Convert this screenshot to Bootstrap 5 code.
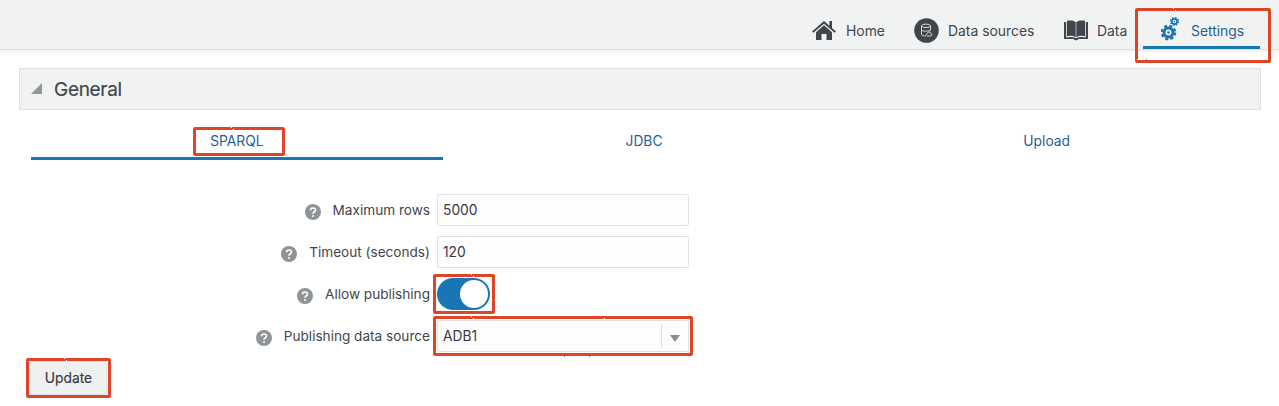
<!DOCTYPE html>
<html lang="en">
<head>
<meta charset="utf-8">
<meta name="viewport" content="width=device-width, initial-scale=1">
<title>Settings</title>
<link href="https://cdn.jsdelivr.net/npm/bootstrap@5.3.0/dist/css/bootstrap.min.css" rel="stylesheet">
<style>
body{font-family:Inter,"Liberation Sans",sans-serif;font-size:14px;line-height:20px;color:#41464b;background:#fff;overflow:hidden;min-height:406px}
.topbar{height:50px;background:#f1f3f3;border-bottom:1px solid #dfe1e2;box-shadow:0 2px 1px #f3f4f4;padding:0 19px 0 0}
.topbar .nav-item{height:49px;padding-top:12px}
.topbar .nav-link{color:#41464b;padding:0;height:37px;display:flex;align-items:center;white-space:nowrap;font-size:13.9px}
.topbar svg{flex:none}
.topbar .nav-link.active{color:#1f5f92;border-bottom:3px solid #1976b4;padding:3px 0 0 18px}
.topbar .nav-link.active svg{margin-top:-4px}
.w-home{width:102px}.w-sources{width:150px}.w-data{width:79px}.w-settings{width:117px}
.l-home{margin-left:10px}.l-src{margin-left:9px}.l-data{margin-left:9px}.l-set{margin-left:11px}
.section-head{margin:18px 18px 0 19px;height:42px;background:#f1f3f3;border:1px solid #dfe1e2;padding-left:11px}
.section-head h1{font-size:19px;letter-spacing:-.3px;line-height:24px;font-weight:400;margin:2px 0 0 11px;-webkit-text-stroke:.2px}
.tabs{margin:12px 31px 0 31px;height:38px}
.tabs .nav-link{padding:9px 0 0;height:38px;color:#1f5f92;text-align:center;border-bottom:3px solid transparent;font-size:13.8px}
.tabs .nav-link.active{border-color:#1976b4}
.t1{width:412px}.t2{width:403px}.t3{width:403px}
.fields{margin-top:34px}
.line{height:32px;margin-bottom:10px}
.caption{width:430px;margin-right:7px;font-size:13.6px}
.help{width:16px;height:16px;margin:4px 12px 0 0;flex:none}
.box{width:252px;height:32px;border:1px solid #dfe1e2;border-radius:2px;background:#fdfdfd;padding:0 5px;font-size:13.8px;color:#36393d;box-shadow:none}
.switch{width:53px;height:32px;border-radius:16px;background:#1976b4;padding:2px}
.switch i{width:28px;height:28px;border-radius:50%;background:#fff}
.arrow{width:27px;height:24px;border-left:1px solid #dfe1e2}
.update{width:78px;height:34px;border:1px solid #e0e2e3;background:#eff0f0;border-radius:2px;margin:-1px 0 0 29px}
.update .btn{font-size:13.8px;color:#36393d;-webkit-text-stroke:.15px}
.update .btn span{display:block;padding:2px 0 0 1px}
.marked{position:relative}
.marked::after{content:"";position:absolute;border:3px solid #e04427;border-radius:2px;pointer-events:none;filter:url(#rough);z-index:2}
.m-set::after{left:-8px;right:-11px;top:8px;bottom:-14px}
.m-tab::after{left:-17px;right:-21px;top:-4px;bottom:-5px}
.m-switch::after{inset:-4px -5px -4px -4px}
.m-select::after{inset:-4px}
.m-update::after{inset:-4px -5px -4px -4px}
</style>
</head>
<body>
<svg width="0" height="0" class="position-absolute"><filter id="rough" x="-5%" y="-15%" width="110%" height="130%" color-interpolation-filters="sRGB"><feTurbulence type="fractalNoise" baseFrequency=".45" numOctaves="1" seed="4"/><feDisplacementMap in="SourceGraphic" scale="2" xChannelSelector="R" yChannelSelector="G"/></filter></svg>

<header class="topbar d-flex justify-content-end">
<ul class="nav flex-nowrap">
<li class="nav-item w-home"><a class="nav-link" href="#"><svg width="24" height="22" viewBox="0 0 24 22" fill="#41464b"><path d="M12 1 0 11.500l1.300 1.300L12 3.700l10.700 9.100L24 11.500l-4-3.500V1h-2.600v4.700z"/><path d="M12 5.200 4 12.200V20h5.500v-6h5v6H20v-7.800z"/></svg><span class="l-home">Home</span></a></li>
<li class="nav-item w-sources"><a class="nav-link" href="#"><svg width="25" height="25" viewBox="0 0 25 25" fill="none"><circle cx="12.500" cy="12.500" r="12.300" fill="#41464b"/><g stroke="#d5d8d9" stroke-width="1"><ellipse cx="12" cy="7.800" rx="4.500" ry="1.700"/><path d="M7.500 7.800v8.500c0 1 2 1.700 4.500 1.700M16.500 7.800v4.500M7.500 12c1 1.500 6 1.500 9 .3"/><path d="M13.500 18a1.500 1.500 0 0 1 0-2.800c.5-1.800 2.700-1.800 3 0a1.400 1.400 0 0 1 0 2.800z"/></g></svg><span class="l-src">Data sources</span></a></li>
<li class="nav-item w-data"><a class="nav-link" href="#"><svg width="24" height="22" viewBox="0 0 24 22" fill="#41464b"><path d="M3 .8c4-.8 7-.3 8.700 1.500V17.500c-2-1.700-5-2.200-8.700-1.200zM21 .8c-4-.8-7-.3-8.700 1.500V17.500c2-1.700 5-2.200 8.700-1.200z"/><path d="M0 2h2.200v15.400c4-.8 7-.7 9.800.8 3-1.500 6-1.600 9.800-.8V2H24v17h-9.500c-1 1.800-4 1.800-5 0H0z"/></svg><span class="l-data">Data</span></a></li>
<li class="nav-item w-settings marked m-set"><a class="nav-link active" href="#"><svg width="19" height="25" viewBox="0 0 19 25" fill="none" stroke="#1976b4"><circle cx="7.500" cy="16.500" r="4.500" stroke-width="2.900"/><circle cx="7.500" cy="16.500" r="6.500" stroke-width="2.600" stroke-dasharray="2.900 2.205"/><circle cx="7.500" cy="16.500" r="1.200" fill="#1976b4" stroke="none"/><circle cx="13.500" cy="5.500" r="2.600" stroke-width="1.700"/><circle cx="13.500" cy="5.500" r="3.800" stroke-width="1.600" stroke-dasharray="1.600 1.385"/><circle cx="13.500" cy="5.500" r=".7" fill="#1976b4" stroke="none"/></svg><span class="l-set">Settings</span></a></li>
</ul>
</header>

<main>
<div class="section-head d-flex align-items-center"><svg width="12" height="12" viewBox="0 0 12 12"><path d="M11 0v11H0z" fill="#92979b"/></svg><h1>General</h1></div>
<nav class="tabs nav flex-nowrap">
<a class="nav-link active t1" href="#"><span class="d-inline-block marked m-tab">SPARQL</span></a>
<a class="nav-link t2" href="#">JDBC</a>
<a class="nav-link t3" href="#">Upload</a>
</nav>
<svg width="0" height="0" class="position-absolute"><symbol id="q" viewBox="0 0 16 16"><circle cx="8" cy="8" r="8" fill="#8f9498"/><path d="M5.500 6.300C5.500 3.200 10.600 3.200 10.500 6 10.500 7.800 8 7.700 8 9.700" fill="none" stroke="#fff" stroke-width="1.600"/><circle cx="8" cy="12" r="1" fill="#fff"/></symbol></svg>
<form class="fields">
<div class="line d-flex align-items-center"><label class="caption d-flex justify-content-end align-items-center"><svg class="help"><use href="#q"/></svg><span>Maximum rows</span></label><input class="form-control box" value="5000"></div>
<div class="line d-flex align-items-center"><label class="caption d-flex justify-content-end align-items-center"><svg class="help"><use href="#q"/></svg><span>Timeout (seconds)</span></label><input class="form-control box" value="120"></div>
<div class="line d-flex align-items-center"><label class="caption d-flex justify-content-end align-items-center"><svg class="help"><use href="#q"/></svg><span>Allow publishing</span></label><div class="switch marked m-switch d-flex justify-content-end" role="switch" aria-checked="true"><i></i></div></div>
<div class="line d-flex align-items-center"><label class="caption d-flex justify-content-end align-items-center"><svg class="help"><use href="#q"/></svg><span>Publishing data source</span></label><div class="marked m-select"><div class="box pe-0 d-flex align-items-center justify-content-between"><span>ADB1</span><span class="arrow d-flex align-items-center justify-content-center"><svg class="mt-1" width="10" height="7" viewBox="0 0 10 7"><path d="M0 0h10L5 7z" fill="#888d91"/></svg></span></div></div></div>
<span class="marked m-update d-inline-block update"><button type="button" class="btn p-0 border-0 w-100 h-100 d-block lh-1"><span>Update</span></button></span>
</form>
</main>
<script src="https://cdn.jsdelivr.net/npm/bootstrap@5.3.0/dist/js/bootstrap.bundle.min.js"></script>
</body>
</html>
